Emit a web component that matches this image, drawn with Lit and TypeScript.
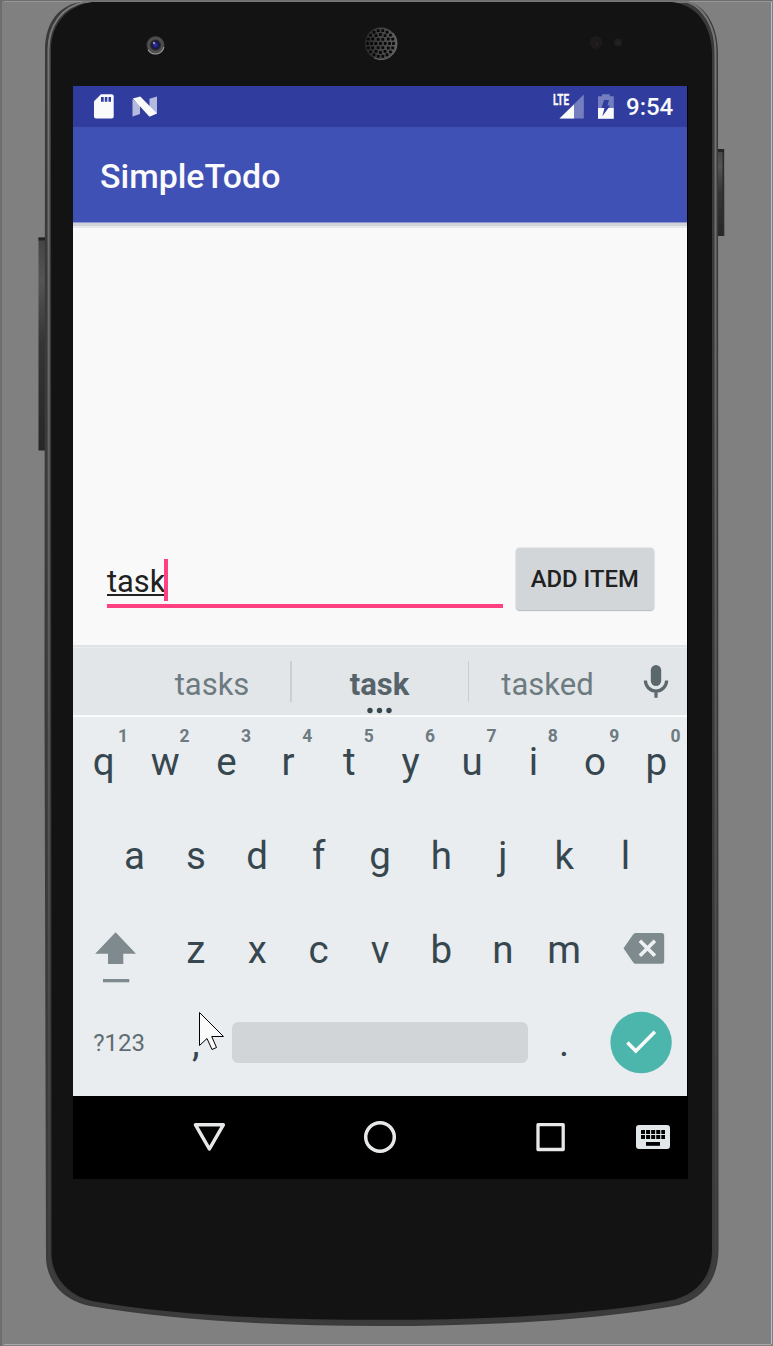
import { LitElement, html, css, svg } from "lit";
import { customElement } from "lit/decorators.js";

const holeRings: [number, number][] = [[0, 1], [4.7, 6], [9, 12], [13, 18]];

@customElement("device-body")
class DeviceBody extends LitElement {
  static styles = css`
    :host { display: block; }
    svg { display: block; }
  `;
  render() {
    const holes = holeRings.flatMap(([r, n]) =>
      Array.from({ length: n }, (_, i) => {
        const a = (i / n) * Math.PI * 2;
        return svg`<rect x=${380.5 + r * Math.cos(a) - 1.4} y=${43.5 + r * Math.sin(a) - 1.4} width="2.8" height="2.8" rx=".7" fill="#080808"/>`;
      })
    );
    return html`<svg width="773" height="1346" viewBox="0 0 773 1346">
      <defs>
        <linearGradient id="side" x1="0" x2="0" y1="0" y2="1">
          <stop offset="0" stop-color="#444"/><stop offset=".2" stop-color="#555"/>
          <stop offset=".5" stop-color="#353535"/><stop offset="1" stop-color="#272727"/>
        </linearGradient>
        <linearGradient id="rim" x1="0" x2="0" y1="0" y2="1">
          <stop offset="0" stop-color="#77787a"/><stop offset=".45" stop-color="#5f6062"/>
          <stop offset=".8" stop-color="#474747"/><stop offset="1" stop-color="#3c3c3c"/>
        </linearGradient>
        <radialGradient id="lens"><stop offset="0" stop-color="#3838a8"/><stop offset=".35" stop-color="#16165c"/>
          <stop offset=".5" stop-color="#222"/><stop offset=".72" stop-color="#555"/><stop offset="1" stop-color="#3a3a3a"/></radialGradient>
        <linearGradient id="grille" x1="0" x2="1"><stop offset="0" stop-color="#2a2a2a"/><stop offset="1" stop-color="#5c5c5c"/></linearGradient>
      </defs>
      <rect width="773" height="1346" fill="#808080"/>
      <rect width="2" height="1346" fill="#6d6d6d"/>
      <rect width="773" height="1" fill="#6d6d6d"/>
      <rect x="4" y="1" width="769" height="1" fill="#979797"/>
      <rect x="4" y="1344" width="767" height="1" fill="#a8a8a8"/>
      <rect x="771" y="2" width="1" height="1342" fill="#b3bfcf"/>
      <rect x="38.5" y="237.500" width="8" height="213" fill="url(#side)"/>
      <rect x="38.5" y="237.500" width="7" height="3" fill="#222"/>
      <rect x="717" y="149" width="7.300" height="87" fill="url(#side)"/>
      <rect x="722.500" y="149" width="1.500" height="87" fill="#2d2d2d"/>
      <rect x="717" y="149" width="7" height="3" fill="#252525"/>
      <path d="M45 50C45 22 60 4 82 2H690C706 8 717.500 25 718 52L718.500 1250C718 1279 704 1298 679 1305C600 1320 490 1326 380 1326C270 1326 170 1320 90 1306C62 1300 47 1281 46 1258L44.500 700Z" fill="#3a3a3b"/>
      <path d="M48.500 50C48.500 25 62 7 84 2H688C704 8 715.500 27 715.500 52L715.700 1250C715 1277 703 1295 678 1302C600 1317 490 1323 380 1323C270 1323 170 1317 91 1303C65 1297 49 1279 49 1256Z" fill="none" stroke="url(#rim)" stroke-width="2"/>
      <path d="M51 50C51 25 66 6 92 2H672C697 5 711 25 712 52V1250C712 1274 700 1292 675 1299.500C600 1314.500 490 1319.800 380 1319.800C270 1319.800 170 1315 92 1301C67 1295 51.500 1276 51.500 1253Z" fill="#131313"/>
      <circle cx="155.500" cy="45" r="9" fill="url(#lens)"/>
      <circle cx="154" cy="43" r="1.200" fill="#9296b8"/>
      <path d="M148 49.500A8.500 8.500 0 0 0 163.800 47" fill="none" stroke="#999" stroke-width="1.300"/>
      <circle cx="381" cy="43.500" r="16" fill="url(#grille)"/>
      ${holes}
      <path d="M393 33A16 16 0 0 1 374 58" fill="none" stroke="#686868" stroke-width="1"/>
      <circle cx="596" cy="42.500" r="6.500" fill="#1c1a1a"/><circle cx="597" cy="44" r="1.200" fill="#3b1d1d"/>
      <circle cx="618" cy="42.500" r="4" fill="#1e1e1e"/><circle cx="618.500" cy="43" r="1" fill="#3b2323"/>
    </svg>`;
  }
}

@customElement("soft-keyboard")
class SoftKeyboard extends LitElement {
  static styles = css`
    :host { display: flex; flex-direction: column; height: 451px; background: #e9edf0; color: #37474f; }
    .suggest { height: 70px; box-sizing: border-box; border-top: 2px solid #dfe3e6; background: #e2e6e9;
      box-shadow: inset 0 1px #e9edef; display: grid; grid-template-columns: 61px 156px 179px 157px 61px;
      font-size: 31px; color: #6d7b81; }
    .word { display: flex; align-items: center; justify-content: center; padding-top: 7px; line-height: 60px; position: relative; }
    .word.best { font-weight: 700; color: #566369; }
    .word.best::before, .word.best::after { content: ""; position: absolute; top: 14px; height: 41px; width: 2px; background: #cbcfd2; }
    .word.best::before { left: 0; }
    .word.best::after { right: 0; width: 1.5px; }
    .more { position: absolute; left: 76px; top: 59px; }
    .keys { display: grid; grid-template-rows: repeat(4, 93.75px); height: 381px; box-shadow: inset 0 2px #fafbfb; }
    .row { display: flex; justify-content: center; font-size: 38.5px; }
    .key { width: 61.4px; line-height: 93.75px; text-align: center; position: relative; }
    .hint { position: absolute; right: 6.3px; top: 9px; font-size: 17.5px; font-weight: 700; line-height: 24px; color: #6d7b81; }
    .wide { width: 92.1px; line-height: 95.5px; text-align: center; font-size: 24px; color: #5f6d73; }
    .bar { width: 296px; height: 41px; margin: 26px 5.5px 0; border-radius: 6px; background: #d1d5d8; }
    svg { display: block; }
  `;
  private letters(s: string, hints = "") {
    return [...s].map((c, i) => html`<div class="key">${c}${hints ? html`<span class="hint">${hints[i]}</span>` : ""}</div>`);
  }
  render() {
    return html`
      <div class="suggest">
        <span></span>
        <div class="word">tasks</div>
        <div class="word best">task
          <svg class="more" width="28" height="8" viewBox="0 0 28 8" fill="#37474f"><circle cx="4" cy="4.500" r="2.700"/><circle cx="13.500" cy="4.500" r="2.700"/><circle cx="23" cy="4.500" r="2.700"/></svg>
        </div>
        <div class="word">tasked</div>
        <svg width="61" height="68" viewBox="626 647 61 68">
          <rect x="650.800" y="665" width="10.400" height="21" rx="5.200" fill="#5b686e"/>
          <path d="M645.400 680.500a10.600 10.600 0 0 0 21.200 0M656 691v6.800" fill="none" stroke="#5b686e" stroke-width="3.200"/>
        </svg>
      </div>
      <div class="keys">
        <div class="row">${this.letters("qwertyuiop", "1234567890")}</div>
        <div class="row">${this.letters("asdfghjkl")}</div>
        <div class="row">
          <svg width="92.1" height="93.75" viewBox="73 903 92.1 93.75" fill="#7f8a8e">
            <path d="M115.600 932.300L136 953.800H123.300V964H108V953.800H95.200Z"/><rect x="103" y="979" width="26.300" height="3.300"/>
          </svg>
          ${this.letters("zxcvbnm")}
          <svg width="92.1" height="93.75" viewBox="594.9 903 92.1 93.75">
            <path d="M635.500 933H661.500a2.600 2.600 0 0 1 2.600 2.600V961.200a2.600 2.600 0 0 1-2.600 2.600H635.500q-1.500 0-2.500-1.500L623.400 948.300L633 934.500q1-1.500 2.500-1.500Z" fill="#7f8a8e"/>
            <path d="M639.800 940.700l15 15M654.800 940.700l-15 15" stroke="#eef1f3" stroke-width="3.700"/>
          </svg>
        </div>
        <div class="row">
          <div class="wide">?123</div>
          <div class="key">,</div>
          <div class="bar"></div>
          <div class="key">.</div>
          <svg width="92.1" height="93.75" viewBox="594.9 996.25 92.1 93.75">
            <circle cx="641" cy="1042.800" r="30.700" fill="#4db6ac"/>
            <path d="M627.300 1042.800L635.700 1051.200L654.800 1032.100" fill="none" stroke="#fafafa" stroke-width="3.600"/>
          </svg>
        </div>
      </div>`;
  }
}

@customElement("app-root")
class AppRoot extends LitElement {
  static styles = css`
    :host { display: block; position: relative; width: 773px; height: 1346px; overflow: hidden; font-family: Roboto, sans-serif; }
    device-body { position: absolute; inset: 0; }
    .stage { position: relative; padding: 86px 0 0 73px; }
    .screen { width: 615px; height: 1093px; background: #000; }
    .panel { width: 614px; background: #f9f9f9; }
    .status { display: flex; justify-content: space-between; height: 41px; background: #303d9f; color: #fafafa; }
    .clock { width: 61px; font-size: 24px; font-weight: 500; line-height: 43px; }
    .right { display: flex; }
    .toolbar { height: 95px; box-sizing: border-box; padding-left: 27px; background: #3f51b5; color: #fafafa;
      font-size: 33.9px; font-weight: 500; line-height: 99px; }
    .content { height: 423px; box-sizing: border-box; padding: 325px 33.5px 0 34px; display: flex; align-items: flex-start;
      justify-content: space-between; box-shadow: inset 0 1px #8f99cc, inset 0 4px #d0d4d8, inset 0 6px #e6e9eb; }
    .field { width: 396px; height: 61px; box-sizing: border-box; border-bottom: 4px solid #ff4081; font-size: 30.8px; color: #212121; display: flex; padding-top: 12px; }
    .typed { height: 37px; line-height: 46px; box-sizing: border-box; border-bottom: 2px solid #212121; }
    .caret { width: 3.5px; height: 42px; background: #ff4081; margin-left: -1px; }
    .add { width: 137.5px; height: 62px; margin-top: 1px; border-radius: 4px; background: #d3d6d9; box-shadow: 0 1px 1px #b9bdc0, 0 0 1px 1px #e6e8ea;
      font: 500 23.8px/63px Roboto, sans-serif; color: #212121; text-align: center; }
    .pointer { position: absolute; left: 198px; top: 1011px; }
    svg { display: block; }
  `;
  render() {
    return html`
      <device-body></device-body>
      <div class="stage">
      <div class="screen">
        <div class="panel">
          <div class="status">
            <svg width="100" height="41" viewBox="73 86 100 41">
              <path d="M101 94.300H111.700a2 2 0 0 1 2 2V116.500a2 2 0 0 1-2 2H96a2 2 0 0 1-2-2V101.300Z" fill="#fafafa"/>
              <path d="M101 97h2.700v4.700H101zM104.800 97h2.500v4.700h-2.500zM108.500 97h2.500v4.700h-2.500z" fill="#303d9f"/>
              <path d="M132.500 99L140 105V114L132.500 116.500ZM149.500 98.800L157 96.500V114L149.500 108Z" fill="#b4b9de"/>
              <path d="M132.800 98.500L140.300 96.500L157 113.500L149.500 116.800Z" fill="#fafafa"/>
            </svg>
            <div class="right">
              <svg width="80" height="41" viewBox="546 86 80 41">
                <path d="M583.800 94.500V118.500H559.500Z" fill="#757fc0"/>
                <path d="M574 104.500V118.500H559.500Z" fill="#fafafa"/>
                <text x="553" y="105" font-size="15" font-weight="700" textLength="16" lengthAdjust="spacingAndGlyphs" fill="#fafafa" stroke="#fafafa" stroke-width=".3">LTE</text>
                <path d="M598 96.300h4v-2.100h7.700v2.100h4.100V108H598Z" fill="#757fc0"/>
                <path d="M598 108h15.800v10.800H598Z" fill="#fafafa"/>
                <path d="M604 100h5l-1.500 5.500h2.800L602.300 116.200L604.500 108h-3Z" fill="#303d9f"/>
              </svg>
              <div class="clock">9:54</div>
            </div>
          </div>
          <div class="toolbar">SimpleTodo</div>
          <div class="content">
            <div class="field"><span class="typed">task</span><span class="caret"></span></div>
            <div class="add">ADD ITEM</div>
          </div>
          <soft-keyboard></soft-keyboard>
        </div>
        <svg width="615" height="83" viewBox="73 1096 615 83" fill="none" stroke="#e6e8ea" stroke-width="3.5" stroke-linejoin="round">
          <path d="M195.500 1124.800H223.300L209.400 1149Z"/>
          <circle cx="380" cy="1137" r="14.300"/>
          <rect x="538" y="1124.700" width="25.200" height="24.800" stroke-width="3.300"/>
          <rect x="636" y="1125" width="34" height="24" rx="3" fill="#e2e7ea" stroke="none"/>
          <path d="M641 1131.900h24M641 1137h24" stroke="#000" stroke-width="4" stroke-dasharray="4 1.080"/>
          <path d="M646 1143.900h14" stroke="#000" stroke-width="3.800"/>
        </svg>
      </div>
      </div>
      <svg class="pointer" width="28" height="41" viewBox="198 1011 28 41">
        <path d="M199.500 1012.500V1045.500L207 1038.500L212 1049.500L216.500 1047.500L211.700 1036.500H223.500Z" fill="#fafafa" stroke="#000" stroke-width="1"/>
      </svg>`;
  }
}
